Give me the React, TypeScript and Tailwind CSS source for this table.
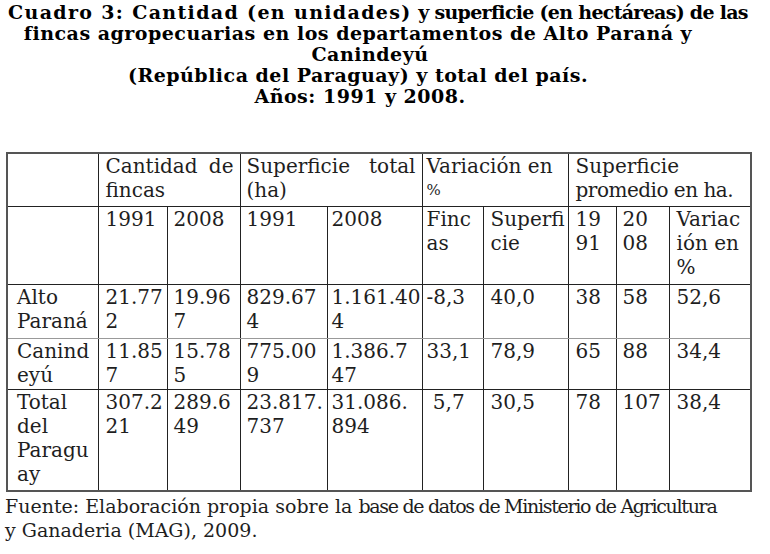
const serif = { fontFamily: '"DejaVu Serif", "Liberation Serif", serif' };

const colWidths = [91, 69, 73, 87, 95, 61, 85, 48, 53, 82];
const padLeft = ["pl-[9px]", "pl-[7px]", "pl-[6px]", "pl-[6px]", "pl-[4px]", "pl-[4px]", "pl-[7px]", "pl-[7px]", "pl-[6px]", "pl-[7px]"];

const subHeader = ["", "1991", "2008", "1991", "2008", "Finc\nas", "Superfi\ncie", "19\n91", "20\n08", "Variac\nión en\n%"];

const rows = [
  { h: "h-[54px]", cells: ["Alto\nParaná", "21.77\n2", "19.96\n7", "829.67\n4", "1.161.40\n4", "-8,3", "40,0", "38", "58", "52,6"] },
  { h: "h-[51px]", cells: ["Canind\neyú", "11.85\n7", "15.78\n5", "775.00\n9", "1.386.7\n47", "33,1", "78,9", "65", "88", "34,4"] },
  { h: "h-[102px]", cells: ["Total\ndel\nParagu\nay", "307.2\n21", "289.6\n49", "23.817.\n737", "31.086.\n894", "\u00a05,7", "30,5", "78", "107", "38,4"] },
];

function Spread({ words }: { words: string[] }) {
  return (
    <div className="flex justify-between pr-[6px]">
      {words.map((w) => (
        <span key={w}>{w}</span>
      ))}
    </div>
  );
}

export default function App() {
  return (
    <div className="w-[770px] h-[554px] bg-white overflow-hidden text-[#1e1e1e]" style={serif}>
      {/* Title */}
      <div className="h-[152px] pt-[2px] font-bold text-[19px] leading-[21px] text-black">
        <div className="pl-[8px] whitespace-nowrap">
          <span className="tracking-[1.35px]">Cuadro 3: Cantidad (en unidades)</span>{" "}
          <span className="tracking-[-0.7px]">y superficie (en hectáreas) de las</span>
        </div>
        <div className="w-[716px] text-center whitespace-nowrap tracking-[0.5px]">
          fincas agropecuarias en los departamentos de Alto Paraná y
        </div>
        <div className="w-[740px] text-center tracking-[0.5px]">Canindeyú</div>
        <div className="w-[716px] text-center tracking-[0.5px]">(República del Paraguay) y total del país.</div>
        <div className="w-[720px] text-center tracking-[0.5px]">Años: 1991 y 2008.</div>
      </div>

      {/* Table */}
      <table
        className="ml-[6px] table-fixed border-collapse border-2 border-[#555] text-[20px] leading-[24px]"
        style={{ width: 744 }}
      >
        <colgroup>
          {colWidths.map((w, i) => (
            <col key={i} style={{ width: w }} />
          ))}
        </colgroup>
        <tbody>
          <tr className="h-[53px] align-top">
            <td className="border border-[#222]" />
            <td colSpan={2} className="border border-[#222] pl-[7px]">
              <Spread words={["Cantidad", "de"]} />
              <div>fincas</div>
            </td>
            <td colSpan={2} className="border border-[#222] pl-[6px]">
              <Spread words={["Superficie", "total"]} />
              <div>(ha)</div>
            </td>
            <td colSpan={2} className="border border-[#222] pl-[4px] whitespace-nowrap">
              <div>Variación en</div>
              <div className="text-[15px]">%</div>
            </td>
            <td colSpan={3} className="border border-[#222] pl-[7px]">
              <div>Superficie</div>
              <div className="whitespace-nowrap tracking-[-0.5px]">promedio en ha.</div>
            </td>
          </tr>
          <tr className="h-[78px] align-top">
            {subHeader.map((c, i) => (
              <td key={i} className={`border border-[#222] whitespace-pre ${padLeft[i]}`}>
                {c}
              </td>
            ))}
          </tr>
          {rows.map((r, ri) => (
            <tr key={ri} className={`${r.h} align-top`}>
              {r.cells.map((c, i) => (
                <td
                  key={i}
                  className={`border ${ri === 0 ? "border-b-[#999]" : ""} border-[#222] whitespace-pre overflow-visible ${padLeft[i]}`}
                >
                  {c}
                </td>
              ))}
            </tr>
          ))}
        </tbody>
      </table>

      {/* Source */}
      <div className="pl-[5px] pt-[2px] text-[19px] leading-[24px] whitespace-nowrap">
        <div>
          Fuente: Elaboración propia sobre la{" "}
          <span className="tracking-[-1.3px]">base de datos de Ministerio de Agricultura</span>
        </div>
        <div>y Ganaderia (MAG), 2009.</div>
      </div>
    </div>
  );
}
